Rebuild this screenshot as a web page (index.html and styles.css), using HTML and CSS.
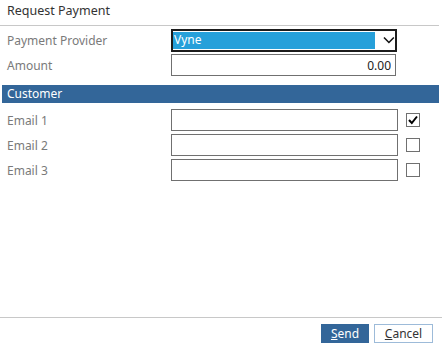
FILE: index.html
```html
<!DOCTYPE html>
<html lang="en">
<head>
  <meta charset="UTF-8" />
  <title>Request Payment</title>
  <link rel="stylesheet" href="styles.css">
</head>
<body>
  <div class="dialog">
    <div class="title">Request Payment</div>

    <div class="content">
      <div class="row">
        <label class="label">Payment Provider</label>
        <div class="select">
          <span class="select-value">Vyne</span>
          <svg class="chevron" width="12" height="8" viewBox="0 0 12 8">
            <path d="M1 1.5 L6 6.5 L11 1.5" fill="none" stroke="#111" stroke-width="1.6"/>
          </svg>
        </div>
      </div>
      <div class="row">
        <label class="label">Amount</label>
        <input class="input amount" type="text" value="0.00" />
      </div>

      <div class="section">Customer</div>

      <div class="row">
        <label class="label">Email 1</label>
        <input class="input wide" type="text" />
        <span class="check checked">
          <svg width="10" height="10" viewBox="0 0 10 10">
            <path d="M1 5 L3.8 8 L9 1.5" fill="none" stroke="#000" stroke-width="2"/>
          </svg>
        </span>
      </div>
      <div class="row">
        <label class="label">Email 2</label>
        <input class="input wide" type="text" />
        <span class="check"></span>
      </div>
      <div class="row">
        <label class="label">Email 3</label>
        <input class="input wide" type="text" />
        <span class="check"></span>
      </div>
    </div>

    <div class="footer">
      <button class="btn btn-primary"><u>S</u>end</button>
      <button class="btn btn-default"><u>C</u>ancel</button>
    </div>
  </div>
</body>
</html>
```

FILE: styles.css
```css
body {
  margin: 0;
  font-family: "Noto Sans", "Open Sans", sans-serif;
  font-size: 12px;
  background: #fff;
}

.dialog {
  width: 442px;
  height: 351px;
  display: flex;
  flex-direction: column;
}

.title {
  height: 25px;
  line-height: 22px;
  padding-left: 7px;
  font-size: 12.5px;
  color: #333;
  border-bottom: 1px solid #c8c8c8;
  margin-right: 3px;
}

.content {
  flex: 1;
  padding-top: 3px;
}

.row {
  display: flex;
  align-items: center;
  height: 22px;
  margin-bottom: 3px;
}

.label {
  width: 164px;
  padding-left: 7px;
  color: #7a7a7a;
}

.select {
  box-sizing: border-box;
  width: 226px;
  height: 23px;
  border: 2px solid #1c1c1c;
  display: flex;
  align-items: center;
}

.select-value {
  width: 204px;
  height: 17px;
  line-height: 16px;
  background: #26a0da;
  color: #fff;
  padding-left: 1px;
}

.chevron {
  margin-left: 8px;
}

.input {
  box-sizing: border-box;
  height: 22px;
  border: 1px solid #707070;
  font-family: inherit;
  font-size: 12px;
  padding: 0 4px;
  margin: 0;
  outline: none;
}

.amount {
  width: 225px;
  text-align: right;
  color: #222;
}

.wide {
  width: 227px;
}

.section {
  height: 18px;
  line-height: 17px;
  margin: 9px 3px 6px 2px;
  padding-left: 5px;
  background: #336699;
  color: #fff;
}

.check {
  box-sizing: border-box;
  width: 14px;
  height: 14px;
  margin-left: 8px;
  border: 1px solid #707070;
  display: flex;
  align-items: center;
  justify-content: center;
}

.footer {
  height: 34px;
  border-top: 1px solid #c8c8c8;
  display: flex;
  justify-content: flex-end;
  align-items: flex-start;
  gap: 5px;
  padding: 6px 9px 0 0;
  box-sizing: border-box;
}

.btn {
  height: 19px;
  font-family: inherit;
  font-size: 12px;
  padding: 0;
  cursor: pointer;
}

.btn-primary {
  width: 48px;
  background: #336699;
  color: #fff;
  border: none;
}

.btn-default {
  width: 59px;
  background: #fff;
  color: #333;
  border: 1px solid #9dbbd9;
}
```
